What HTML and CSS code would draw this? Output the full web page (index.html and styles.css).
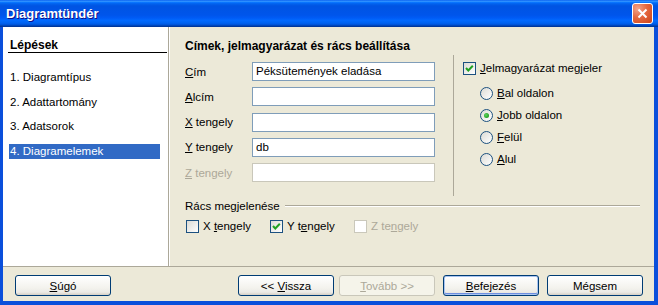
FILE: index.html
```html
<!DOCTYPE html>
<html>
<head>
<meta charset="utf-8">
<link rel="stylesheet" href="styles.css">
</head>
<body>
<div class="window">
    <div class="titlebar">
        <span class="title">Diagramtündér</span>
        <span class="close">
            <svg width="13" height="13" viewBox="0 0 13 13"><path d="M2.5 2.5 L10.5 10.5 M10.5 2.5 L2.5 10.5" stroke="#fff" stroke-width="2" fill="none"/></svg>
        </span>
    </div>
    <div class="client">
        <div class="main">
            <div class="steps">
                <div class="steps-head">Lépések</div>
                <div class="step">1. Diagramtípus</div>
                <div class="step">2. Adattartomány</div>
                <div class="step">3. Adatsorok</div>
                <div class="step active">4. Diagramelemek</div>
            </div>
            <div class="page">
                <div class="page-head">Címek, jelmagyarázat és rács beállítása</div>
                <div class="top">
                    <div class="fields">
                        <label><u>C</u>ím</label><div class="input">Péksütemények eladása</div>
                        <label><u>A</u>lcím</label><div class="input"></div>
                        <label><u>X</u> tengely</label><div class="input"></div>
                        <label><u>Y</u> tengely</label><div class="input">db</div>
                        <label class="off"><u>Z</u> tengely</label><div class="input off"></div>
                    </div>
                    <div class="legend">
                        <div class="opt"><span class="cb"><svg width="11" height="11" viewBox="0 0 11 11"><polyline points="2,5 4.3,7.5 8.8,2.8" stroke="#21A121" stroke-width="2" fill="none"/></svg></span><span><u>J</u>elmagyarázat megjeler</span></div>
                        <div class="radios">
                            <div class="opt"><span class="rb"></span><span><u>B</u>al oldalon</span></div>
                            <div class="opt"><span class="rb on"></span><span><u>J</u>obb oldalon</span></div>
                            <div class="opt"><span class="rb"></span><span><u>F</u>elül</span></div>
                            <div class="opt"><span class="rb"></span><span><u>A</u>lul</span></div>
                        </div>
                    </div>
                </div>
                <div class="grid-head"><span>Rács megjelenése</span><span class="rule"></span></div>
                <div class="grid-opts">
                    <div class="opt"><span class="cb"></span><span>X <u>t</u>engely</span></div>
                    <div class="opt"><span class="cb"><svg width="11" height="11" viewBox="0 0 11 11"><polyline points="2,5 4.3,7.5 8.8,2.8" stroke="#21A121" stroke-width="2" fill="none"/></svg></span><span>Y t<u>e</u>ngely</span></div>
                    <div class="opt off"><span class="cb"></span><span>Z te<u>n</u>gely</span></div>
                </div>
            </div>
        </div>
        <div class="footer">
            <div class="btn"><span><u>S</u>úgó</span></div>
            <div class="spacer"></div>
            <div class="btn"><span>&lt;&lt; <u>V</u>issza</span></div>
            <div class="btn off"><span><u>T</u>ovább &gt;&gt;</span></div>
            <div class="btn default"><span><u>B</u>efejezés</span></div>
            <div class="btn"><span>Mégsem</span></div>
        </div>
    </div>
</div>
</body>
</html>
```

FILE: styles.css
```css
body {
    margin: 0;
    font-family: "Liberation Sans", Arial, sans-serif;
    font-size: 11.5px;
    color: #000;
}

.window {
    width: 658px;
    height: 305px;
    background: #0A4FDB;
    display: flex;
    flex-direction: column;
    overflow: hidden;
}

.titlebar {
    height: 27px;
    flex: none;
    display: flex;
    align-items: center;
    justify-content: space-between;
    padding: 0 5px 0 6px;
    background: linear-gradient(to bottom, #0058EE 0%, #3593FF 4%, #288EFF 6%, #127DFF 8%, #036FFC 10%, #0262EE 14%, #0057E5 20%, #0054E3 24%, #0055EB 56%, #005BF5 66%, #026AFE 76%, #0062EF 86%, #0052D6 92%, #0040AB 96%, #003092 100%);
}

.title {
    color: #fff;
    font-weight: bold;
    font-size: 13px;
    text-shadow: 1px 1px #0F1089;
}

.close {
    width: 21px;
    height: 21px;
    box-sizing: border-box;
    border: 1px solid #fff;
    border-radius: 3px;
    background: radial-gradient(circle at 25% 25%, #F2A48C 0%, #E5683F 45%, #CC4418 100%);
    display: flex;
    align-items: center;
    justify-content: center;
    margin-top: -1px;
}

.client {
    flex: 1;
    margin: 0 4px 4px 3px;
    background: #ECE9D8;
    display: flex;
    flex-direction: column;
}

.main {
    display: flex;
    height: 239px;
}

.steps {
    width: 166px;
    box-sizing: border-box;
    background: #fff;
    border-right: 1px solid #ACA899;
    padding: 12px 1px 0 5px;
}

.steps-head {
    font-weight: bold;
    font-size: 12px;
    line-height: 13px;
    padding-left: 2px;
    border-bottom: 1px solid #000;
    margin-bottom: 17px;
}

.step {
    height: 15px;
    line-height: 15px;
    width: 151px;
    margin-left: 1px;
    padding-left: 1px;
    box-sizing: border-box;
    margin-bottom: 9.5px;
}

.step.active {
    background: #316AC5;
    color: #fff;
}

.page {
    flex: 1;
    border-left: 1px solid #fff;
    padding: 13px 0 0 15px;
}

.page-head {
    font-weight: bold;
    font-size: 12px;
    line-height: 13px;
}

.top {
    display: flex;
    height: 141px;
    margin-top: 2px;
}

.fields {
    width: 268px;
    flex: none;
    display: grid;
    grid-template-columns: 67px 183px;
    grid-auto-rows: 19px;
    row-gap: 6.25px;
    align-items: center;
    align-content: start;
    padding-top: 7px;
}

.fields label.off {
    color: #ACA899;
}

.input {
    height: 19px;
    box-sizing: border-box;
    border: 1px solid #7F9DB9;
    background: #fff;
    padding-left: 3px;
    line-height: 17px;
}

.input.off {
    border-color: #C9C7BA;
}

.legend {
    flex: 1;
    border-left: 1px solid #ACA899;
    padding: 7px 0 0 9px;
}

.opt {
    display: flex;
    align-items: center;
    height: 13px;
    line-height: 13px;
}

.opt.off {
    color: #ACA899;
}

.cb {
    width: 13px;
    height: 13px;
    box-sizing: border-box;
    border: 1px solid #1C5180;
    background: linear-gradient(135deg, #DCDBD5, #fff);
    margin-right: 4px;
    flex: none;
    display: flex;
}

.off .cb {
    border-color: #CAC8BB;
    background: #fff;
}

.radios {
    margin: 11.5px 0 0 17px;
}

.radios .opt {
    margin-bottom: 9.3px;
}

.rb {
    width: 13px;
    height: 13px;
    box-sizing: border-box;
    border: 1px solid #1C5180;
    border-radius: 50%;
    background: linear-gradient(135deg, #DCDBD5, #fff);
    margin-right: 4px;
    flex: none;
    display: flex;
    align-items: center;
    justify-content: center;
}

.rb.on::after {
    content: "";
    width: 5px;
    height: 5px;
    border-radius: 50%;
    background: radial-gradient(circle at 40% 40%, #5FD35F, #21A121 70%);
}

.grid-head {
    display: flex;
    margin-top: 3.5px;
    line-height: 13px;
}

.grid-head .rule {
    flex: 1;
    height: 0;
    border-top: 1px solid #ACA899;
    border-bottom: 1px solid #fff;
    margin: 5px 14px 0 5px;
}

.grid-opts {
    display: flex;
    margin-top: 7.5px;
    padding-left: 1px;
}

.grid-opts .opt {
    width: 84px;
}

.footer {
    flex: 1;
    border-top: 1px solid #ACA899;
    display: flex;
    padding: 8px 11px 0 12px;
}

.spacer {
    flex: 1;
}

.btn {
    width: 96px;
    height: 21px;
    box-sizing: border-box;
    border: 1px solid #003C74;
    border-radius: 3px;
    background: linear-gradient(to bottom, #FFFFFF 0%, #F4F3EE 60%, #ECEBE6 85%, #D6D0C5 100%);
    display: flex;
    align-items: center;
    justify-content: center;
    margin-left: 8px;
}

.btn:first-child {
    margin-left: 0;
}

.spacer + .btn {
    margin-left: 0;
}

.btn.off {
    margin-left: 5px;
    border-color: #C9C7BA;
    background: #F5F4EA;
    color: #ACA899;
}

.btn.default {
    box-shadow: inset 0 0 0 1px #A9C4F0, inset 0 -1px 0 1px #6E8FE0;
}
```
